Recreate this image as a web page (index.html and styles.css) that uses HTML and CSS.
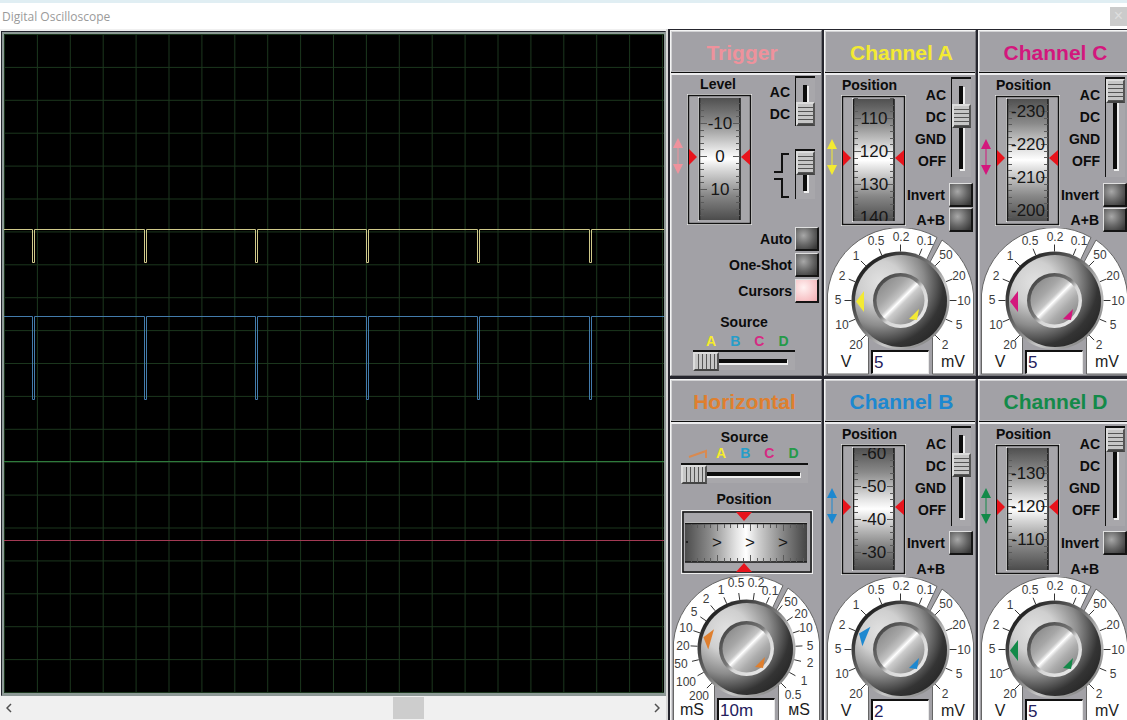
FILE: index.html
```html
<!DOCTYPE html>
<html lang="en">
<head>
<meta charset="utf-8">
<title>Digital Oscilloscope</title>
<link rel="stylesheet" href="styles.css">
</head>
<body>
<svg class="defs" aria-hidden="true">
  <defs>
    <linearGradient id="drum-v" x1="0" y1="0" x2="0" y2="1">
      <stop offset="0" stop-color="#505050"/><stop offset=".2" stop-color="#8a8a8a"/>
      <stop offset=".42" stop-color="#e4e4e4"/><stop offset=".5" stop-color="#ffffff"/>
      <stop offset=".58" stop-color="#dcdcdc"/><stop offset=".8" stop-color="#868686"/>
      <stop offset="1" stop-color="#4c4c4c"/>
    </linearGradient>
    <linearGradient id="drum-h">
      <stop offset="0" stop-color="#4c4c4c"/><stop offset=".2" stop-color="#8a8a8a"/>
      <stop offset=".42" stop-color="#e4e4e4"/><stop offset=".5" stop-color="#ffffff"/>
      <stop offset=".6" stop-color="#d0d0d0"/><stop offset=".82" stop-color="#808080"/>
      <stop offset="1" stop-color="#444444"/>
    </linearGradient>
    <radialGradient id="knob-body" cx=".28" cy=".3" r=".78">
      <stop offset="0" stop-color="#e2e2e2"/><stop offset=".3" stop-color="#cfcfcf"/>
      <stop offset=".6" stop-color="#8c8c8c"/><stop offset=".88" stop-color="#343434"/>
      <stop offset="1" stop-color="#2b2b2b"/>
    </radialGradient>
    <linearGradient id="knob-rim" x1=".15" y1=".15" x2=".85" y2=".85">
      <stop offset="0" stop-color="#222"/><stop offset=".45" stop-color="#777"/>
      <stop offset=".7" stop-color="#c8c8c8"/><stop offset="1" stop-color="#8a8a8a"/>
    </linearGradient>
    <linearGradient id="cap-rim" x1=".15" y1=".15" x2=".85" y2=".85">
      <stop offset="0" stop-color="#4a4a4a"/><stop offset=".45" stop-color="#777"/>
      <stop offset=".6" stop-color="#d6d6d6"/><stop offset="1" stop-color="#e6e6e6"/>
    </linearGradient>
    <linearGradient id="cap-face" x1=".14" y1=".14" x2=".86" y2=".86">
      <stop offset="0" stop-color="#8f8f8f"/><stop offset=".25" stop-color="#a6a6a6"/>
      <stop offset=".42" stop-color="#c4c4c4"/><stop offset=".5" stop-color="#ffffff"/>
      <stop offset=".58" stop-color="#cccccc"/><stop offset=".75" stop-color="#acacac"/>
      <stop offset="1" stop-color="#8c8c8c"/>
    </linearGradient>
    <pattern id="grid" x="1" y="1" width="32.900" height="32.900" patternUnits="userSpaceOnUse">
      <path d="M0 32.400H33M32.400 0V33" stroke="#1b361d" fill="none"/>
    </pattern>
  </defs>
</svg>
<div class="window">
  <header class="titlebar">
    <h1 class="caption">Digital Oscilloscope</h1>
    <button class="close" aria-label="Close">×</button>
  </header>
  <main class="workspace">
    <section class="scope" aria-label="Traces">
      <div class="screen">
        <svg class="traces" viewBox="0 0 660 659" preserveAspectRatio="none" fill="none">
          <rect width="660" height="659" fill="url(#grid)"/>
          <path stroke="#cfc98a" d="M0 195.500H28.500V228.500H30.500V195.500H140.500V228.500H142.500V195.500H251.500V228.500H253.500V195.500H362.500V228.500H364.500V195.500H473.500V228.500H475.500V195.500H585.500V228.500H587.500V195.500H660"/>
          <path stroke="#437bab" d="M0 282.500H28.500V365.500H30.500V282.500H140.500V365.500H142.500V282.500H251.500V365.500H253.500V282.500H362.500V365.500H364.500V282.500H473.500V365.500H475.500V282.500H585.500V365.500H587.500V282.500H660"/>
          <path stroke="#2e7a3c" d="M0 427.500H660"/>
          <path stroke="#a33a54" d="M0 506.500H660"/>
        </svg>
      </div>
      <div class="scrollbar">
        <button class="step" aria-label="Scroll left"><svg width="6" height="10"><path d="M5 1L1 5L5 9"/></svg></button>
        <div class="track"><div class="thumb"></div></div>
        <button class="step" aria-label="Scroll right"><svg width="6" height="10"><path d="M1 1L5 5L1 9"/></svg></button>
      </div>
    </section>
    <section class="controls" id="controls" aria-label="Controls"></section>
  </main>
</div>
<script src="script.js"></script>
</body>
</html>
```
FILE: styles.css
```css
* { box-sizing: border-box; }
body { margin: 0; font-family: "Liberation Sans", Arial, sans-serif; background: #fff; color: #0c0c0c; overflow: hidden; }
button, input { font: inherit; margin: 0; padding: 0; border: 0; border-radius: 0; }
svg { display: block; }
.defs { position: absolute; width: 0; height: 0; }
.window { display: flex; flex-direction: column; height: 100vh; border-top: 3px solid #e0eef3; }
.titlebar { display: flex; flex: none; justify-content: space-between; align-items: center; height: 26px; padding-left: 2px; }
.caption { margin: 0; font: 400 12px "Open Sans", "Noto Sans", sans-serif; color: #9a9a9a; }
.close { width: 17px; height: 19px; background: #cbcbcb; color: #dedede; font-size: 16px; line-height: 16px; }
.workspace { display: flex; flex: 1; min-height: 0; }

.scope { display: flex; flex: 1; flex-direction: column; min-width: 0; padding-top: 2px; background: #f0f0f0; }
.screen { flex: 1; min-height: 0; margin-left: 1px; padding: 2px 1px 2px 2px; border: 1px solid #23232d; border-right-color: #8b9594; border-bottom-color: #8b9594; background: #000; box-shadow: inset 0 0 0 2px #8d9a96; }
.traces { width: 100%; height: 100%; background: #000; }
.scrollbar { display: flex; flex: none; align-items: center; height: 24px; background: #f0f0f0; }
.step { display: flex; justify-content: center; align-items: center; width: 18px; height: 22px; background: none; }
.step path { fill: none; stroke: #505050; stroke-width: 1.5; }
.track { display: flex; flex: 1; height: 22px; }
.thumb { width: 5%; margin-left: 59.5%; background: #cdcdcd; }

.controls { display: grid; flex: none; grid-template-columns: repeat(3, 152px); grid-auto-rows: 346px; gap: 3px 2px; width: 461px; padding: 1px 0 0 4px; overflow: hidden; background: linear-gradient(90deg, #d8d8d8 2px, #26262e 2px); }
.panel { border: 1px solid #77777c; border-top-color: #f4f4f4; border-left-color: #f4f4f4; background: #a2a1a6; box-shadow: inset 1px 1px 0 #d2d2d4; }
.title { display: flex; justify-content: center; align-items: center; height: 42px; margin: 0; padding: 2px 0 0 3px; border-bottom: 1px solid #0c0c0c; font-size: 21px; line-height: 24px; color: var(--ink); box-shadow: inset 0 -1px 0 #b8b8bc; }
.body { border-top: 2px solid #ececee; font-size: 14px; font-weight: 700; line-height: 16px; }

.upper { display: flex; height: 158px; padding: 2px 2px 0 1px; }
.shift { flex: none; width: 12px; margin: 61px 3px 0 0; fill: var(--ink); stroke: var(--ink); }
.dial { flex: none; width: 65px; }
.name { display: block; margin-bottom: 2px; text-align: center; white-space: nowrap; }
.dial .name { padding-right: 6px; margin-left: -2px; }
.wheel text { font-size: 17px; font-weight: 400; text-anchor: middle; fill: #161616; }
.switches { display: flex; flex: 1; flex-direction: column; align-items: flex-end; }
.selector { display: flex; gap: 5px; align-items: flex-start; margin: 0 2px 5px 0; }
.marks { display: flex; flex-direction: column; margin: 0; padding: 7px 0 0; list-style: none; text-align: right; line-height: 22px; }
.toggle { display: flex; gap: 4px; align-items: center; height: 26px; white-space: nowrap; }
.blank { height: 28px; padding-right: 28px; }
.toggle input { appearance: none; width: 24px; height: 24px; border: 1px solid #e0e0e0; border-right: 2px solid #141414; border-bottom: 2px solid #141414; background: radial-gradient(circle at 36% 36%, #a8a8a8, #666 50%, #383838 90%); }
.toggle input:checked { background: radial-gradient(circle at 36% 36%, #fff2f2, #f8c8cb 60%, #f2aeb4); }

.slide { appearance: none; display: block; flex: none; cursor: pointer; }
.slide.vertical { writing-mode: vertical-lr; width: 20px; height: 100px; border-top: 2px solid #111; border-left: 1px solid #111;
  background: linear-gradient(#0c0c0c, #0c0c0c) 7px 7px / 4px calc(100% - 15px) no-repeat, linear-gradient(#eee, #eee) 8px 8px / 5px calc(100% - 14px) no-repeat, #a8a7ab; }
.slide.short { height: 50px; }
.slide.vertical::-webkit-slider-thumb { appearance: none; width: 19px; height: 24px; border: 2px solid #dcdcdc; border-right-color: #555; border-bottom-color: #444; background: repeating-linear-gradient(#c6c6c6 0 3px, #555 3px 4px) 0 0 / 100% 100%; }
.slide.horizontal { height: 20px; border-top: 2px solid #111;
  background: linear-gradient(#0c0c0c, #0c0c0c) 0 7px / calc(100% - 8px) 4px no-repeat, linear-gradient(#eee, #eee) 0 8px / calc(100% - 7px) 5px no-repeat, #a8a7ab; }
.slide.horizontal::-webkit-slider-thumb { appearance: none; width: 26px; height: 19px; border: 2px solid #dcdcdc; border-right-color: #555; border-bottom-color: #444; background: repeating-linear-gradient(90deg, #c6c6c6 0 3px, #555 3px 4px); }

.range { display: grid; justify-items: center; margin: -5px 1px 0; }
.range > * { grid-area: 1 / 1; }
.scale text { font-size: 12px; font-weight: 400; text-anchor: middle; fill: #3c3c3c; }
.scale .unit { font-size: 16px; fill: #1c1c1c; }
.readout { align-self: end; width: 58px; height: 24px; margin-bottom: 1px; padding-left: 1px; border: 1px solid #e8e8e8; border-top: 2px solid #111; border-left: 2px solid #111; background: #fff; color: #24205c; font-size: 17px; font-weight: 400; }

.trigger .title { padding: 2px 8px 0 0; }
.trigger .upper { padding: 1px 6px 0 1px; height: 151px; }
.trigger .selector { margin: 0 0 23px; }
.trigger .marks { padding-top: 5px; }
.trigger .dial .name { margin-left: 0; padding-right: 3px; }
.edges { margin-top: 4px; fill: none; stroke: #111; stroke-width: 2; }
.toggles { display: flex; flex-direction: column; align-items: flex-end; padding-right: 2px; }
.toggles .toggle { gap: 3px; }
.source { display: flex; flex-direction: column; width: 102px; margin: 10px 0 0 22px; }
.source .name { margin-bottom: 3px; }
.letters { display: flex; gap: 14px; align-items: center; margin-bottom: 1px; padding-left: 13px; }
.a { color: #f6ec2c; } .b { color: #269dc9; } .c { color: #d62a83; } .d { color: #259a49; }
.horizontal-panel .title { padding: 2px 3px 0 0; }
.horizontal-panel .source { width: 127px; margin: 5px 0 8px 10px; }
.horizontal-panel .source .name { margin-bottom: 0; }
.horizontal-panel .letters { margin-bottom: 2px; padding-left: 7px; }
.ramp { margin-right: -6px; fill: none; stroke: #d98a50; stroke-width: 2; }
.pan { margin-left: 10px; width: 132px; }
.pan .name { margin-bottom: 3px; padding-right: 6px; }
.horizontal-panel .range { margin-top: 2px; }
```
FILE: script.js
```javascript
// Front panel of the oscilloscope, built from the state of each block.
const channels = {
  A: { ink: '#f3ea33', coupling: 1, first: 110, count: 4, at: 23, turn: 0, value: '5', sum: true },
  B: { ink: '#1d88d0', coupling: 1, first: -60, count: 4, at: 9, turn: 22.5, value: '2', sum: false },
  C: { ink: '#d3177d', coupling: 0, first: -230, count: 4, at: 16, turn: 0, value: '5', sum: true },
  D: { ink: '#138a49', coupling: 0, first: -130, count: 3, at: 29, turn: 0, value: '5', sum: false }
};
const voltMarks = ['20', '10', '5', '2', '1', '0.5', '0.2', '0.1', '50', '20', '10', '5', '2'];
const timeMarks = ['200', '100', '50', '20', '10', '5', '2', '1', '0.5', '0.2', '0.1', '50', '20', '10', '5', '2', '1', '0.5'];
const voltRadii = [63, 63, 63, 63, 63, 64, 64, 64, 64, 63, 63, 63, 63];
const timeRadii = [67, 69, 67, 64, 64, 64, 64, 64, 66, 66, 62, 64, 65, 63, 64, 65, 66, 66];

function ruler(from, length, offset, draw) {
  let path = '';
  for (let p = offset % 6.6; p < length; p += 6.6) {
    const major = Math.abs((p - offset) / 33 - Math.round((p - offset) / 33)) < 0.01;
    path += draw(Math.round(from + p) + 0.5, major ? 7 : 4);
  }
  return path;
}

function wheel(first, at, count) {
  let labels = '';
  for (let i = 0; i < count; i++) {
    labels += `<text x="33" y="${at + 33 * i + 6}">${first + 10 * i}</text>`;
  }
  const ticks = ruler(3, 121, at - 3 + 33, (y, n) => `M13 ${y}h${n}M${53 - n} ${y}h${n}`);
  return `<svg class="wheel" width="65" height="131" role="img" aria-label="Position wheel">
    <rect x=".5" y=".5" width="64" height="130" fill="#b4b3b7" stroke="#eee"/>
    <rect x="1.500" y="1.500" width="62" height="128" fill="none" stroke="#111" stroke-width="1.500"/>
    <rect x="3" y="3" width="59" height="125" fill="#a7a6aa"/>
    <path d="M11.500 3V127" stroke="#eee"/>
    <rect x="12" y="4" width="41" height="122" fill="url(#drum-v)"/>
    <path d="M12.500 4V126M53 4V126" stroke="#181818" stroke-width="1.500"/>
    <path d="${ticks}" stroke="#5a5a5a"/>
    <svg y="4" width="65" height="122" viewBox="0 4 65 122">${labels}</svg>
    <path d="M2 55L10 63L2 71ZM63 55L54 63L63 71Z" fill="#e8141c"/>
  </svg>`;
}

function arrows() {
  return `<svg class="shift" width="12" height="38"><path d="M6 1L11 11H1ZM6 37L11 27H1Z" stroke="none"/><path d="M6 10V28"/></svg>`;
}

function knob(marks, radii, ink, turn, units, spread) {
  const cx = 74.5, cy = 72.5, step = 270 / (marks.length - 1);
  let ticks = '', labels = '';
  marks.forEach((mark, i) => {
    const angle = 225 - step * i;
    const a = angle * Math.PI / 180, c = Math.cos(a), s = Math.sin(a);
    const b = (angle + (spread[i] || 0)) * Math.PI / 180;
    ticks += `M${cx + 49 * c} ${cy - 49 * s}L${cx + 56 * c} ${cy - 56 * s}`;
    labels += `<text x="${Math.round(cx + radii[i] * Math.cos(b))}" y="${Math.round(cy - radii[i] * Math.sin(b) + 4)}">${mark}</text>`;
  });
  return `<svg class="scale" width="148" height="147" role="img" aria-label="Range knob">
    <path d="M1.500 146V66A73 73 0 0 1 111 9.500L93 48L74.500 72.500L42.500 104V146Z" fill="#fff" stroke="#666"/>
    <path d="M116 12A73 73 0 0 1 147.500 66V146H106.500V104L74.500 72.500L97 47Z" fill="#fff" stroke="#666"/>
    <path d="M43 146V100H106V146Z" fill="#a2a1a6"/>
    <path d="${ticks}" stroke="#333"/>
    ${labels}
    <circle cx="${cx}" cy="${cy}" r="49" fill="url(#knob-rim)"/>
    <circle cx="75" cy="73" r="46" fill="url(#knob-body)"/>
    <circle cx="${cx}" cy="${cy}" r="27.500" fill="url(#cap-rim)"/>
    <circle cx="${cx}" cy="${cy}" r="24" fill="url(#cap-face)"/>
    <path d="M38 63L30 73.500L38 84Z" fill="${ink}" transform="rotate(${turn} ${cx} ${cy})"/>
    <path d="M93 81L83 91L91 92Z" fill="${ink}"/>
    <text class="unit" x="20" y="139">${units[0]}</text>
    <text class="unit" x="127" y="139">${units[1]}</text>
  </svg>`;
}

function toggle(label, on) {
  return `<label class="toggle">${label}<input type="checkbox"${on ? ' checked' : ''}></label>`;
}

function channel(id) {
  const ch = channels[id];
  return `<article class="panel" style="--ink:${ch.ink}">
    <h2 class="title">Channel ${id}</h2>
    <div class="body">
      <div class="upper">
        ${arrows()}
        <div class="dial"><span class="name">Position</span>${wheel(ch.first, ch.at, ch.count)}</div>
        <div class="switches">
          <div class="selector">
            <ul class="marks"><li>AC</li><li>DC</li><li>GND</li><li>OFF</li></ul>
            <input class="slide vertical" type="range" min="0" max="3" value="${ch.coupling}" aria-label="Channel ${id} coupling">
          </div>
          ${toggle('Invert')}
          ${ch.sum ? toggle('A+B') : '<span class="toggle blank">A+B</span>'}
        </div>
      </div>
      <div class="range">
        ${knob(voltMarks, voltRadii, ch.ink, ch.turn, ['V', 'mV'], {})}
        <input class="readout" type="text" value="${ch.value}" aria-label="Channel ${id} range">
      </div>
    </div>
  </article>`;
}

const letters = '<span class="a">A</span><span class="b">B</span><span class="c">C</span><span class="d">D</span>';

const trigger = `<article class="panel trigger" style="--ink:#ef929c">
  <h2 class="title">Trigger</h2>
  <div class="body">
    <div class="upper">
      ${arrows()}
      <div class="dial"><span class="name">Level</span>${wheel(-10, 29, 3)}</div>
      <div class="switches">
        <div class="selector">
          <ul class="marks"><li>AC</li><li>DC</li></ul>
          <input class="slide vertical short" type="range" min="0" max="1" value="1" aria-label="Trigger coupling">
        </div>
        <div class="selector">
          <svg class="edges" width="17" height="46"><path d="M16 1H9V19H1M1 26H9V44H16"/></svg>
          <input class="slide vertical short" type="range" min="0" max="1" value="0" aria-label="Trigger edge">
        </div>
      </div>
    </div>
    <div class="toggles">${toggle('Auto')}${toggle('One-Shot')}${toggle('Cursors', true)}</div>
    <div class="source">
      <label class="name" for="trigger-source">Source</label>
      <div class="letters">${letters}</div>
      <input class="slide horizontal" id="trigger-source" type="range" min="0" max="3" value="0">
    </div>
  </div>
</article>`;

const panTicks = ruler(4, 122, 32, (x, n) => `M${x} 14v${n}M${x} ${52 - n}v${n}`);
const horizontal = `<article class="panel horizontal-panel" style="--ink:#df7f2e">
  <h2 class="title">Horizontal</h2>
  <div class="body">
    <div class="source">
      <label class="name" for="sweep-source">Source</label>
      <div class="letters"><svg class="ramp" width="20" height="9"><path d="M1 8L18 2V9"/></svg>${letters}</div>
      <input class="slide horizontal" id="sweep-source" type="range" min="0" max="4" value="0">
    </div>
    <div class="pan">
      <span class="name">Position</span>
      <svg class="wheel" width="132" height="64" role="img" aria-label="Horizontal position wheel">
        <rect x=".5" y=".5" width="131" height="63" fill="#a7a6aa" stroke="#eee"/>
        <rect x="2" y="2" width="128" height="60" fill="none" stroke="#111" stroke-width="1.500"/>
        <path d="M4 12.500H126" stroke="#eee"/>
        <rect x="4" y="13" width="122" height="39" fill="url(#drum-h)"/>
        <path d="M4 13.500H126M4 52H126" stroke="#181818" stroke-width="1.500"/>
        <path d="${panTicks}" stroke="#5a5a5a"/>
        <circle cx="6" cy="32" r="1" fill="#111"/>
        <text x="36" y="38">&gt;</text><text x="69" y="38">&gt;</text><text x="102" y="38">&gt;</text>
        <path d="M55 2H71L63 11ZM55 62H71L63 53Z" fill="#e8141c"/>
      </svg>
    </div>
    <div class="range">
      ${knob(timeMarks, timeRadii, '#df7f2e', 15.9, ['mS', 'мS'], { 8: 1, 10: 2, 11: -4, 12: -2 })}
      <input class="readout" type="text" value="10m" aria-label="Time base">
    </div>
  </div>
</article>`;

document.getElementById('controls').innerHTML =
  trigger + channel('A') + channel('C') + horizontal + channel('B') + channel('D');
```
